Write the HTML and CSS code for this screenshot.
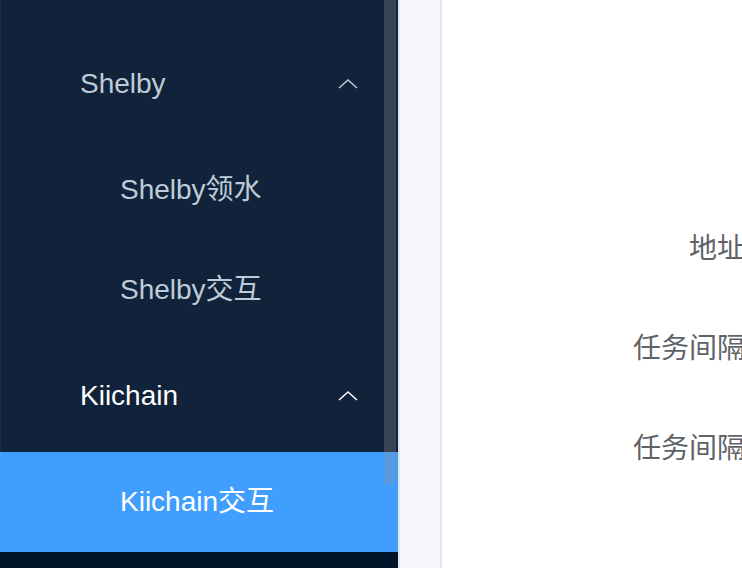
FILE: index.html
```html
<!DOCTYPE html>
<html lang="zh-CN">
<head>
<meta charset="utf-8">
<title>Menu</title>
<link rel="stylesheet" href="styles.css">
</head>
<body>
<aside class="sidebar">
  <ul class="menu">
    <li class="submenu">
      <div class="submenu-title">
        <span>Shelby</span>
        <svg class="arrow" width="20" height="10" viewBox="0 0 20 10"><polyline points="1,9 10,1 19,9" fill="none" stroke="currentColor" stroke-width="1.5"/></svg>
      </div>
      <ul class="submenu-list">
        <li class="menu-item">Shelby领水</li>
        <li class="menu-item">Shelby交互</li>
      </ul>
    </li>
    <li class="submenu is-active">
      <div class="submenu-title">
        <span>Kiichain</span>
        <svg class="arrow" width="20" height="10" viewBox="0 0 20 10"><polyline points="1,9 10,1 19,9" fill="none" stroke="currentColor" stroke-width="1.5"/></svg>
      </div>
      <ul class="submenu-list">
        <li class="menu-item is-active">Kiichain交互</li>
      </ul>
    </li>
  </ul>
  <div class="scroll-thumb"></div>
</aside>
<div class="gutter"></div>
<main class="content">
  <div class="form">
    <div class="form-row"><label class="form-label">地址</label></div>
    <div class="form-row"><label class="form-label">任务间隔</label></div>
    <div class="form-row"><label class="form-label">任务间隔</label></div>
  </div>
</main>
</body>
</html>
```

FILE: styles.css
```css
html, body {
  margin: 0;
  padding: 0;
}
body {
  width: 742px;
  height: 568px;
  overflow: hidden;
  display: flex;
  font-family: "Liberation Sans", "Noto Sans CJK SC", sans-serif;
  background: #ffffff;
}
ul {
  list-style: none;
  margin: 0;
  padding: 0;
}
.sidebar {
  position: relative;
  flex: 0 0 398px;
  height: 568px;
  background: #001528;
  overflow: hidden;
}
.menu {
  padding-top: 28px;
  background: #11233a;
  box-shadow: inset 1px 0 0 #1b2d44;
}
.submenu-title {
  height: 112px;
  display: flex;
  align-items: center;
  justify-content: space-between;
  padding: 0 40px 0 80px;
  font-size: 28px;
  color: #bfcbd9;
}
.submenu.is-active .submenu-title {
  color: #ffffff;
}
.arrow {
  display: block;
}
.menu-item {
  height: 100px;
  line-height: 100px;
  padding-left: 120px;
  font-size: 28px;
  color: #bfcbd9;
  white-space: nowrap;
}
.menu-item.is-active {
  background: #409eff;
  color: #ffffff;
}
.scroll-thumb {
  position: absolute;
  left: 384px;
  top: 0;
  width: 12px;
  height: 486px;
  border-radius: 0 0 6px 6px;
  background: rgba(144, 147, 153, 0.3);
}
.gutter {
  flex: 0 0 40px;
  height: 568px;
  background: #f5f6f9;
  border-left: 2px solid #e3e6ec;
  border-right: 2px solid #e3e6ec;
}
.content {
  flex: 1 0 auto;
  height: 568px;
  background: #ffffff;
}
.form {
  padding-top: 196px;
}
.form-row {
  height: 100px;
  display: flex;
  align-items: center;
}
.form-label {
  width: 303px;
  flex: 0 0 303px;
  text-align: right;
  font-size: 28px;
  color: #606266;
  white-space: nowrap;
}
```
